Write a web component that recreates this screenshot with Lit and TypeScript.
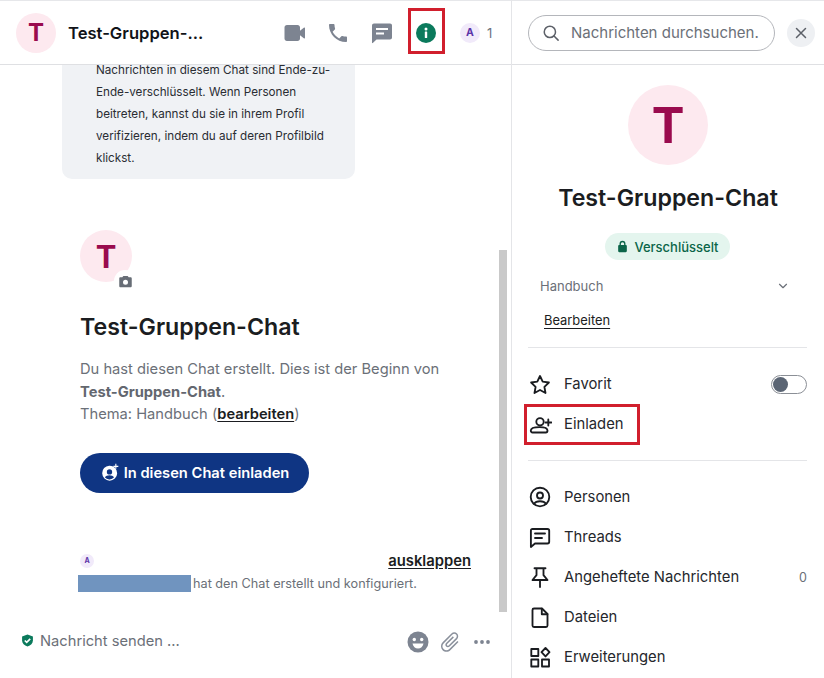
import { LitElement, html, css, svg } from "lit";
import { customElement } from "lit/decorators.js";

const ic = (size: number, body: unknown, vb = "0 0 24 24") =>
  html`<svg width=${size} height=${size} viewBox=${vb}>${body}</svg>`;

const lineIcon = (body: unknown) =>
  html`<svg width="24" height="24" viewBox="0 0 24 24" fill="none" stroke="#1a1c20" stroke-width="1.850" stroke-linecap="round" stroke-linejoin="round">${body}</svg>`;

@customElement("app-root")
export class AppRoot extends LitElement {
  static styles = css`
    :host {
      display: flex;
      width: 824px;
      height: 678px;
      overflow: hidden;
      position: relative;
      background: #fff;
      font-family: Inter, "Liberation Sans", sans-serif;
      color: #1b1d21;
    }
    * { box-sizing: border-box; }
    .left {
      width: 512px;
      flex: none;
      display: flex;
      flex-direction: column;
      border-right: 1px solid #e4e5e8;
      position: relative;
    }
    .right {
      flex: 1;
      display: flex;
      flex-direction: column;
      min-width: 0;
    }
    .topbar {
      height: 65px;
      flex: none;
      border-top: 1px solid #e6e7ea;
      border-bottom: 1px solid #dfe0e3;
      display: flex;
      align-items: center;
      position: relative;
      z-index: 1;
      background: #fff;
    }
    .left .topbar { padding-left: 16px; }
    .avatar {
      border-radius: 50%;
      background: #fde9ef;
      color: #9a0b4e;
      display: flex;
      align-items: center;
      justify-content: center;
      font-weight: 700;
      flex: none;
    }
    .a40 { width: 40px; height: 40px; font-size: 24px; }
    .a52 { width: 52px; height: 52px; font-size: 31px; }
    .a80 { width: 80px; height: 80px; font-size: 49px; }
    .chat-name {
      margin-left: 12px;
      font-size: 16.6px;
      font-weight: 600;
      color: #111318;
      width: 140px;
      white-space: nowrap;
    }
    .actions {
      position: relative;
      display: flex;
      align-items: center;
      margin-left: 75px;
    }
    .actions svg { display: block; flex: none; }
    .act-phone { margin-left: 19px; }
    .act-chat { margin-left: 20px; }
    .act-info { margin-left: 20px; }
    .people { margin-left: 22px; display: flex; align-items: center; gap: 7px; font-size: 13px; color: #6b7280; }
    .mini {
      border-radius: 50%;
      background: #f1eafa;
      color: #5b34a8;
      display: flex;
      align-items: center;
      justify-content: center;
      font-weight: 700;
      flex: none;
    }
    .m20 { width: 20px; height: 20px; font-size: 10.5px; }
    .m14 { width: 14px; height: 14px; font-size: 7px; }
    .scroll {
      flex: 1;
      min-height: 0;
      position: relative;
    }
    .notice {
      margin: -22px 0 0 62px;
      width: 293px;
      height: 136px;
      padding: 16px 12px 0 34px;
      background: #f0f2f5;
      border-radius: 0 0 10px 10px;
      font-size: 11.7px;
      line-height: 22px;
      color: #2a2d33;
    }
    .intro { margin: 51px 0 0 80px; width: 400px; }
    .av-wrap { position: relative; width: 52px; height: 52px; }
    .cam {
      position: absolute;
      left: 34px;
      top: 40px;
      width: 22px;
      height: 22px;
      border-radius: 50%;
      background: #fff;
      display: flex;
      align-items: center;
      justify-content: center;
    }
    h1 {
      margin: 29px 0 0;
      font-size: 23.2px;
      line-height: 32px;
      font-weight: 600;
      color: #1b1d21;
      white-space: nowrap;
    }
    .desc {
      margin: 15px 0 0;
      font-size: 14.7px;
      line-height: 22.6px;
      color: #6b7078;
      white-space: nowrap;
    }
    .desc b { font-weight: 700; color: #63676f; }
    .desc a { font-weight: 600; color: #1b1d21; text-decoration: underline; text-underline-offset: 2px; }
    .cta {
      margin-top: 27px;
      width: 229px;
      height: 40px;
      border-radius: 20px;
      background: #0f3583;
      color: #fff;
      display: flex;
      align-items: center;
      justify-content: center;
      gap: 4px;
      font-size: 14.7px;
      font-weight: 600;
      white-space: nowrap;
    }
    .sys {
      margin: 59px 0 0 78px;
      width: 393px;
    }
    .sys-top {
      display: flex;
      align-items: center;
      justify-content: space-between;
      padding-left: 2px;
      height: 18px;
    }
    .expand {
      font-size: 14.8px;
      font-weight: 600;
      color: #1b1d21;
      text-decoration: underline;
      text-underline-offset: 2px;
    }
    .sys-line {
      display: flex;
      align-items: center;
      gap: 2px;
      font-size: 12.7px;
      color: #6b7078;
      margin-top: 5px;
      white-space: nowrap;
    }
    .redact { width: 113px; height: 17px; background: #7094bf; flex: none; }
    .composer {
      height: 74px;
      flex: none;
      display: flex;
      align-items: flex-start;
      padding: 26px 17px 0 21px;
      background: #fff;
    }
    .shield { margin-top: 4px; }
    .composer-text {
      margin-left: 6px;
      font-size: 14.7px;
      line-height: 22px;
      color: #6b7078;
      flex: 1;
      white-space: nowrap;
    }
    .composer svg { display: block; flex: none; }
    .comp-tools { display: flex; align-items: center; gap: 8px; }
    .scrollbar {
      position: absolute;
      left: 499px;
      top: 250px;
      width: 8px;
      height: 362px;
      background: #c9c9c9;
    }
    .mark {
      position: absolute;
      border: 3px solid #d11f2d;
      pointer-events: none;
      z-index: 2;
    }
    .mark-info { left: 408px; top: 8px; width: 37px; height: 46px; }
    .mark-invite { left: 524px; top: 404px; width: 116px; height: 41px; }
    .right .topbar { padding: 0 9px 0 16px; justify-content: space-between; }
    .search {
      width: 247px;
      height: 36px;
      border: 1px solid #b4b6bb;
      border-radius: 18px;
      display: flex;
      align-items: center;
      padding-left: 13px;
      gap: 11px;
      font-size: 15px;
      color: #6b7078;
      white-space: nowrap;
    }
    .search svg { flex: none; }
    .close {
      width: 28px;
      height: 28px;
      border-radius: 50%;
      background: #eef0f3;
      display: flex;
      align-items: center;
      justify-content: center;
      flex: none;
    }
    .profile {
      display: flex;
      flex-direction: column;
      align-items: center;
      padding-top: 20px;
    }
    .profile h2 {
      margin: 17px 0 0;
      font-size: 23.2px;
      line-height: 32px;
      font-weight: 600;
      color: #1b1d21;
    }
    .enc {
      margin: 19px 1px 0 0;
      height: 27px;
      width: 125px;
      border-radius: 14px;
      background: #e4f5ee;
      color: #0b6549;
      font-size: 13px;
      font-weight: 500;
      display: flex;
      align-items: center;
      justify-content: center;
      gap: 5px;
    }
    .topic {
      margin: 18px 34px 0 28px;
      height: 18px;
      display: flex;
      align-items: center;
      justify-content: space-between;
      font-size: 13px;
      color: #6b7078;
    }
    .edit {
      margin: 18px 0 0 32px;
      font-size: 12.9px;
      line-height: 18px;
      color: #1b1d21;
      text-decoration: underline;
      text-underline-offset: 3px;
    }
    .divider { height: 1px; background: #e4e5e8; margin: 0 17px 0 16px; flex: none; }
    .d1 { margin-top: 17px; }
    .group { padding: 16px 17px 16px 16px; }
    .row {
      height: 40px;
      display: flex;
      align-items: center;
      font-size: 14.8px;
      color: #25272c;
      white-space: nowrap;
    }
    .row svg { display: block; flex: none; margin-right: 12px; }
    .row .label { flex: 1; }
    .row .count { font-size: 12.5px; color: #6b7078; }
    .toggle {
      width: 36px;
      height: 19px;
      border: 1px solid #8b8f96;
      border-radius: 10px;
      padding: 1px;
      flex: none;
    }
    .toggle i { display: block; width: 15px; height: 15px; border-radius: 50%; background: #5b6574; }
  `;

  render() {
    return html`
      <div class="left">
        <div class="topbar">
          <div class="avatar a40">T</div>
          <div class="chat-name">Test-Gruppen-...</div>
          <div class="actions">
            <span>${ic(24, svg`<path fill="#7d8491" d="M4 4h10.500c1.500 0 2.500 1 2.500 2.500v3.200l3.800-3c.7-.5 1.200-.2 1.200.5v9.600c0 .7-.5 1-1.200.5L17 14.300v3.200c0 1.500-1 2.500-2.500 2.500H4c-1.500 0-2.500-1-2.500-2.500v-11C1.500 5 2.500 4 4 4z"/>`)}</span>
            <span class="act-phone">${ic(24, svg`<path fill="#7d8491" d="M6.620 10.790c1.440 2.830 3.760 5.140 6.590 6.590l2.200-2.200c.27-.27.67-.36 1.020-.24 1.120.37 2.330.57 3.570.57.55 0 1 .45 1 1V20c0 .55-.45 1-1 1-9.390 0-17-7.610-17-17 0-.55.45-1 1-1h3.500c.55 0 1 .45 1 1 0 1.250.2 2.450.57 3.570.11.35.03.74-.25 1.020l-2.200 2.200z"/>`)}</span>
            <span class="act-chat">${ic(24, svg`<path fill="#7d8491" fill-rule="evenodd" d="M4 2.500h16c1.200 0 2 .9 2 2v12c0 1.200-.8 2-2 2H6.500L2.800 22c-.4.3-.8.1-.8-.4V4.500c0-1.100.9-2 2-2zM6 7v2h12V7H6zm0 4.500v2h8v-2H6z"/>`)}</span>
            <span class="act-info">${ic(24, svg`<circle cx="12" cy="12" r="10" fill="#0b7a5c"/><rect x="10.800" y="10.600" width="2.400" height="6.400" rx=".5" fill="#fff"/><circle cx="12" cy="8" r="1.500" fill="#fff"/>`)}</span>
            <div class="people"><div class="mini m20">A</div><span>1</span></div>
          </div>
        </div>
        <div class="scroll">
          <div class="notice">Nachrichten in diesem Chat sind Ende-zu-Ende-verschlüsselt. Wenn Personen beitreten, kannst du sie in ihrem Profil verifizieren, indem du auf deren Profilbild klickst.</div>
          <div class="intro">
            <div class="av-wrap">
              <div class="avatar a52">T</div>
              <div class="cam">${ic(15, svg`<path fill="#676d76" fill-rule="evenodd" d="M8.500 3h7l1.600 2.300H20c1.200 0 2 .9 2 2V19c0 1.200-.8 2-2 2H4c-1.200 0-2-.8-2-2V7.300c0-1.100.8-2 2-2h2.900L8.500 3zM12 9a4 4 0 1 0 0 8 4 4 0 0 0 0-8z"/>`)}</div>
            </div>
            <h1>Test-Gruppen-Chat</h1>
            <p class="desc">Du hast diesen Chat erstellt. Dies ist der Beginn von<br /><b>Test-Gruppen-Chat</b>.<br />Thema: Handbuch (<a>bearbeiten</a>)</p>
            <div class="cta">
              ${ic(20, svg`<path fill="#fff" fill-rule="evenodd" d="M11 3.200a9 9 0 1 0 9.600 9.400A9 9 0 0 0 11 3.200zM11.400 7.500a3.200 3.200 0 1 1 0 6.400a3.200 3.200 0 0 1 0-6.400zM5.700 17.200c1.200-1.700 3.300-2.500 5.700-2.500s4.400.8 5.500 2.500a7 7 0 0 1-5.500 2.500a7 7 0 0 1-5.700-2.500z"/><path stroke="#fff" stroke-width="1.300" d="M19 1v6M16 4h6"/>`)}
              <span>In diesen Chat einladen</span>
            </div>
          </div>
          <div class="sys">
            <div class="sys-top"><div class="mini m14">A</div><span class="expand">ausklappen</span></div>
            <div class="sys-line"><span class="redact"></span><span>hat den Chat erstellt und konfiguriert.</span></div>
          </div>
        </div>
        <div class="composer">
          <span class="shield">${ic(13, svg`<path fill="#0b7a5c" d="M12 1l10 3.500v7c0 6-4.200 10-10 11.500C6.200 21.500 2 17.500 2 11.500v-7L12 1z"/><path fill="none" stroke="#fff" stroke-width="3" d="M7 12l3.500 3.500L17 9"/>`)}</span>
          <div class="composer-text">Nachricht senden ...</div>
          <div class="comp-tools">
            ${ic(24, svg`<circle cx="12" cy="12" r="10.500" fill="#7d8491"/><circle cx="8.300" cy="9.500" r="1.700" fill="#fff"/><circle cx="15.700" cy="9.500" r="1.700" fill="#fff"/><path fill="#fff" d="M6.500 13.500h11c-.5 3-2.800 5-5.500 5s-5-2-5.500-5z"/>`)}
            ${ic(24, svg`<g transform="rotate(45 12 12)"><path fill="#8a909b" d="M16.500 6v11.500c0 2.210-1.790 4-4 4s-4-1.790-4-4V5c0-1.380 1.120-2.500 2.500-2.500s2.500 1.120 2.500 2.500v10.500c0 .55-.45 1-1 1s-1-.45-1-1V6H10v9.500c0 1.380 1.120 2.500 2.500 2.500s2.500-1.120 2.500-2.500V5c0-2.210-1.790-4-4-4S7 2.790 7 5v12.500c0 3.040 2.460 5.500 5.500 5.500s5.500-2.460 5.500-5.500V6h-1.500z"/></g>`)}
            ${ic(24, svg`<circle cx="6" cy="12" r="1.900" fill="#7d8491"/><circle cx="12" cy="12" r="1.900" fill="#7d8491"/><circle cx="18" cy="12" r="1.900" fill="#7d8491"/>`)}
          </div>
        </div>
        <div class="scrollbar"></div>
      </div>

      <div class="right">
        <div class="topbar">
          <div class="search">
            ${ic(18, svg`<circle cx="10.500" cy="10.500" r="7.500" fill="none" stroke="#5c6068" stroke-width="2"/><path stroke="#5c6068" stroke-width="2" stroke-linecap="round" d="M16 16l5.500 5.500"/>`)}
            <span>Nachrichten durchsuchen.</span>
          </div>
          <div class="close">${ic(18, svg`<path stroke="#5c6068" stroke-width="2" stroke-linecap="round" d="M6 6l12 12M18 6L6 18"/>`)}</div>
        </div>
        <div class="profile">
          <div class="avatar a80">T</div>
          <h2>Test-Gruppen-Chat</h2>
          <div class="enc">
            ${ic(13, svg`<path fill="#0b6549" fill-rule="evenodd" d="M12 1.500a5.500 5.500 0 0 0-5.500 5.500v2H6c-1.100 0-2 .9-2 2v9.500c0 1.100.9 2 2 2h12c1.100 0 2-.9 2-2V11c0-1.100-.9-2-2-2h-.5V7A5.500 5.500 0 0 0 12 1.500zM9 9V7a3 3 0 0 1 6 0v2H9z"/>`)}
            <span>Verschlüsselt</span>
          </div>
        </div>
        <div class="topic">
          <span>Handbuch</span>
          ${ic(14, svg`<path fill="none" stroke="#6b7078" stroke-width="2" stroke-linecap="round" stroke-linejoin="round" d="M6 9l6 6 6-6"/>`)}
        </div>
        <div class="edit">Bearbeiten</div>
        <div class="divider d1"></div>
        <div class="group">
          <div class="row">
            ${lineIcon(svg`<path transform="translate(0 .8)" d="M12 3.200l2.700 5.700 6.200.8-4.500 4.300 1.100 6.200-5.500-3-5.500 3 1.100-6.200-4.500-4.300 6.200-.8z"/>`)}
            <span class="label">Favorit</span>
            <div class="toggle"><i></i></div>
          </div>
          <div class="row">
            ${lineIcon(svg`<circle cx="12" cy="9.800" r="3.700"/><path d="M2.800 18.500c0-2 3-3.400 8.700-3.400s8 1.400 8 3.400c0 1.200-.7 2-1.700 2H4.500c-1 0-1.700-.8-1.700-2z"/><path d="M20.300 7.500v6M17.500 10.500h6"/>`)}
            <span class="label">Einladen</span>
          </div>
        </div>
        <div class="divider"></div>
        <div class="group">
          <div class="row">
            ${lineIcon(svg`<circle cx="12" cy="12" r="9.300"/><circle cx="12" cy="10.500" r="3"/><path d="M6 18.800c1.200-1.800 3.400-2.600 6-2.600s4.800.8 6 2.600"/>`)}
            <span class="label">Personen</span>
          </div>
          <div class="row">
            ${lineIcon(svg`<path d="M4.500 4h15c1 0 1.700.7 1.700 1.700v11.100c0 1-.7 1.700-1.700 1.700H7L2.900 22V5.700c0-1 .6-1.700 1.600-1.700z"/><path d="M7 8.500h10M7 13h7"/>`)}
            <span class="label">Threads</span>
          </div>
          <div class="row">
            ${lineIcon(svg`<path d="M6.500 3.200h11M8.500 3.200v7L4.500 15h15l-4-4.800v-7M12 15v7"/>`)}
            <span class="label">Angeheftete Nachrichten</span>
            <span class="count">0</span>
          </div>
          <div class="row">
            ${lineIcon(svg`<path d="M4.500 5c0-.9.6-1.500 1.500-1.500h8l5.500 5.500v11.500c0 .9-.6 1.500-1.500 1.500H6c-.9 0-1.500-.6-1.500-1.500z"/><path d="M13.800 3.600v5.600h5.600"/>`)}
            <span class="label">Dateien</span>
          </div>
          <div class="row">
            ${lineIcon(svg`<rect x="3.300" y="4" width="7" height="7"/><rect x="3.300" y="14.500" width="7" height="7"/><rect x="14" y="14.500" width="7" height="7"/><path d="M17.500 3l4 4.200-4 4.200-4-4.200z"/>`)}
            <span class="label">Erweiterungen</span>
          </div>
        </div>
      </div>
      <div class="mark mark-info"></div>
      <div class="mark mark-invite"></div>
    `;
  }
}
